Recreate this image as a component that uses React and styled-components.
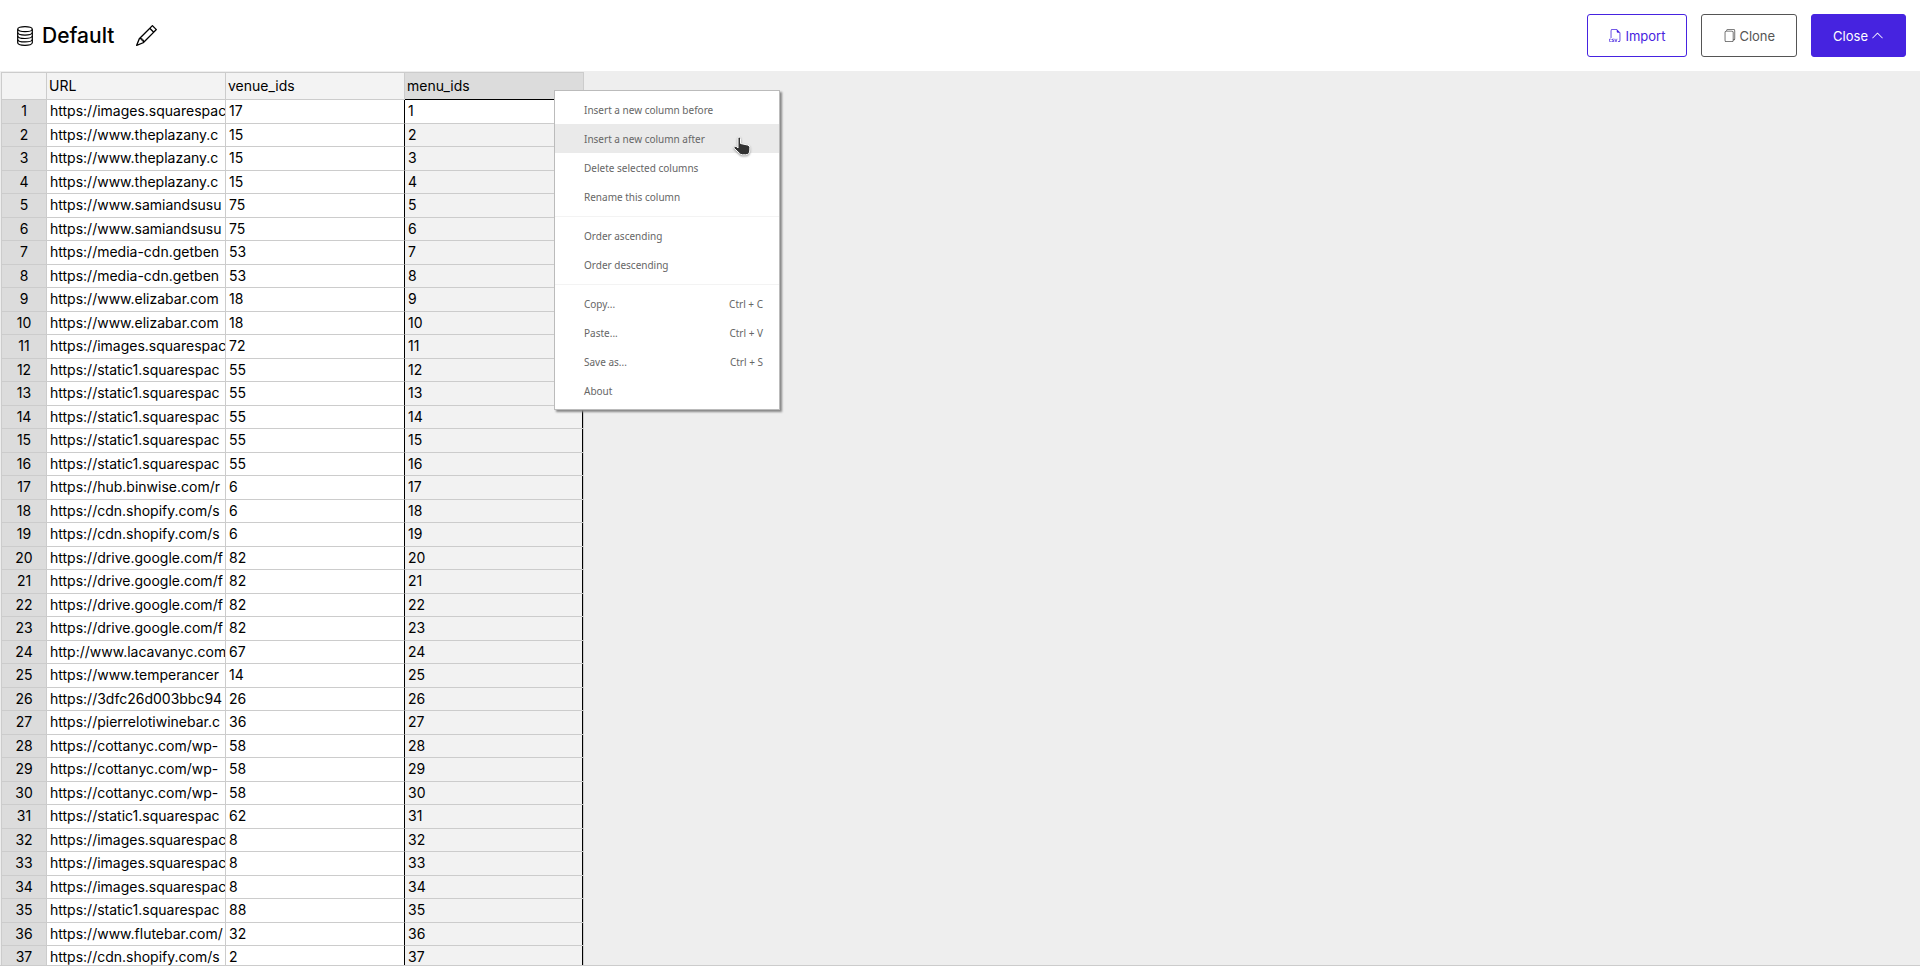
import React, { useState } from 'react'
import styled, { createGlobalStyle } from 'styled-components'
import { BsPencil, BsFiletypeCsv, BsFiles, BsChevronUp } from 'react-icons/bs'

const columns = ['URL', 'venue_ids', 'menu_ids']

const rows = [
  ['https://images.squarespac', '17'],
  ['https://www.theplazany.c', '15'],
  ['https://www.theplazany.c', '15'],
  ['https://www.theplazany.c', '15'],
  ['https://www.samiandsusu', '75'],
  ['https://www.samiandsusu', '75'],
  ['https://media-cdn.getben', '53'],
  ['https://media-cdn.getben', '53'],
  ['https://www.elizabar.com', '18'],
  ['https://www.elizabar.com', '18'],
  ['https://images.squarespac', '72'],
  ['https://static1.squarespac', '55'],
  ['https://static1.squarespac', '55'],
  ['https://static1.squarespac', '55'],
  ['https://static1.squarespac', '55'],
  ['https://static1.squarespac', '55'],
  ['https://hub.binwise.com/r', '6'],
  ['https://cdn.shopify.com/s', '6'],
  ['https://cdn.shopify.com/s', '6'],
  ['https://drive.google.com/f', '82'],
  ['https://drive.google.com/f', '82'],
  ['https://drive.google.com/f', '82'],
  ['https://drive.google.com/f', '82'],
  ['http://www.lacavanyc.com', '67'],
  ['https://www.temperancer', '14'],
  ['https://3dfc26d003bbc94', '26'],
  ['https://pierrelotiwinebar.c', '36'],
  ['https://cottanyc.com/wp-', '58'],
  ['https://cottanyc.com/wp-', '58'],
  ['https://cottanyc.com/wp-', '58'],
  ['https://static1.squarespac', '62'],
  ['https://images.squarespac', '8'],
  ['https://images.squarespac', '8'],
  ['https://images.squarespac', '8'],
  ['https://static1.squarespac', '88'],
  ['https://www.flutebar.com/', '32'],
  ['https://cdn.shopify.com/s', '2'],
]

const menuGroups = [
  [
    { label: 'Insert a new column before' },
    { label: 'Insert a new column after' },
    { label: 'Delete selected columns' },
    { label: 'Rename this column' },
  ],
  [{ label: 'Order ascending' }, { label: 'Order descending' }],
  [
    { label: 'Copy...', shortcut: 'Ctrl + C' },
    { label: 'Paste...', shortcut: 'Ctrl + V' },
    { label: 'Save as...', shortcut: 'Ctrl + S' },
    { label: 'About' },
  ],
]

const Database = () => (
  <svg
    viewBox='0 0 16 20'
    fill='none'
    stroke='currentColor'
    strokeWidth='1.2'
    aria-hidden='true'
  >
    <ellipse cx='8' cy='3.2' rx='7.3' ry='2.5' />
    <path d='M.7 3.2v13.6C.7 18.2 4 19.3 8 19.3s7.3-1.1 7.3-2.5V3.2' />
    <path d='M.7 6.6C.7 8 4 9.1 8 9.1s7.3-1.1 7.3-2.5M.7 10c0 1.4 3.3 2.5 7.3 2.5s7.3-1.1 7.3-2.5M.7 13.4c0 1.4 3.3 2.5 7.3 2.5s7.3-1.1 7.3-2.5' />
  </svg>
)

const Pointer = () => (
  <PointerIcon viewBox='0 0 18 20' aria-hidden='true'>
    <path
      d='M5 2.5Q5 1 6.2 1T7.5 2.5V7.5l7 1.5q2.3.5 2.3 2.5V14q0 4.8-4.3 4.8H9.5q-2 0-3.2-1.6L1.5 12.6q-1-1.4.3-2.1 1.1-.5 2.1.4L5 12z'
      fill='#333'
      stroke='#fff'
      strokeWidth='1'
    />
  </PointerIcon>
)

const App = () => {
  const [active, setActive] = useState('Insert a new column after')

  return (
    <Page>
      <GlobalStyle />
      <Header>
        <Title>
          <Database />
          <h1>Default</h1>
          <EditButton type='button' aria-label='Rename'>
            <BsPencil />
          </EditButton>
        </Title>
        <Actions>
          <Button type='button' $color='#4623e0'>
            <BsFiletypeCsv />
            Import
          </Button>
          <Button type='button' $color='#555'>
            <BsFiles />
            Clone
          </Button>
          <Button type='button' $color='#4623e0' $filled>
            Close
            <BsChevronUp />
          </Button>
        </Actions>
      </Header>

      <Sheet>
        <Table>
          <colgroup>
            <IndexCol />
            {columns.map((name) => (
              <DataCol key={name} />
            ))}
          </colgroup>
          <thead>
            <tr>
              <ColumnHead aria-label='Row' />
              {columns.map((name) => (
                <ColumnHead key={name} $selected={name === 'menu_ids'}>
                  {name}
                </ColumnHead>
              ))}
            </tr>
          </thead>
          <tbody>
            {rows.map(([url, venue], i) => (
              <Row key={i}>
                <RowHead scope='row'>{i + 1}</RowHead>
                <Cell>{url}</Cell>
                <Cell $edge>{venue}</Cell>
                <SelectedCell $focused={i === 0}>{i + 1}</SelectedCell>
              </Row>
            ))}
          </tbody>
        </Table>

        <Menu>
          {menuGroups.map((group, i) => (
            <MenuGroup key={i}>
              {group.map(({ label, shortcut }) => (
                <MenuItem
                  key={label}
                  type='button'
                  $active={label === active}
                  onMouseEnter={() => setActive(label)}
                >
                  <span>{label}</span>
                  {shortcut && <span>{shortcut}</span>}
                </MenuItem>
              ))}
            </MenuGroup>
          ))}
          <Pointer />
        </Menu>
      </Sheet>
    </Page>
  )
}

const GlobalStyle = createGlobalStyle`
  * {
    box-sizing: border-box;
  }
  body {
    margin: 0;
    color: #000;
    background: #fff;
    font-family: Inter, 'Liberation Sans', sans-serif;
  }
`

const Page = styled.div`
  display: flex;
  flex-direction: column;
  height: 100vh;
`

const Header = styled.header`
  display: flex;
  flex: none;
  align-items: center;
  justify-content: space-between;
  padding: 14px 14px 14px 17px;
`

const Title = styled.div`
  display: flex;
  align-items: center;

  > svg {
    width: 16px;
    height: 20px;
    margin-right: 9px;
  }

  h1 {
    margin: 0;
    font-size: 21px;
    font-weight: 500;
    line-height: 28px;
  }
`

const EditButton = styled.button`
  display: flex;
  margin-left: 22px;
  padding: 0;
  border: 0;
  color: inherit;
  background: none;
  cursor: pointer;

  svg {
    width: 21px;
    height: 21px;
  }
`

const Actions = styled.div`
  display: flex;
  gap: 14px;
`

const Button = styled.button`
  display: flex;
  align-items: center;
  gap: 3px;
  height: 43px;
  padding: 0 21px;
  border: 1px solid ${({ $color }) => $color};
  border-radius: 3px;
  color: ${({ $color, $filled }) => ($filled ? '#fff' : $color)};
  background: ${({ $color, $filled }) => ($filled ? $color : '#fff')};
  font-family: inherit;
  font-size: 13px;
  cursor: pointer;

  svg {
    width: 13px;
    height: 13px;
  }
`

const Sheet = styled.main`
  position: relative;
  flex: 1;
  min-height: 0;
  padding: 1px 0 0 1px;
  overflow: hidden;
  border-bottom: 1px solid #ccc;
  background: #eee;
`

const Table = styled.table`
  width: 583px;
  border-collapse: separate;
  border-spacing: 0;
  border-top: 1px solid #ccc;
  border-left: 1px solid #ccc;
  table-layout: fixed;
  font-size: 14px;
`

const IndexCol = styled.col`
  width: 45px;
`

const DataCol = styled.col`
  width: 179px;
`

const ColumnHead = styled.th`
  height: 27px;
  padding: 0 2px;
  border-right: 1px solid #ccc;
  border-bottom: 1px solid ${({ $selected }) => ($selected ? '#000' : '#ccc')};
  background: ${({ $selected }) => ($selected ? '#dcdcdc' : '#f3f3f3')};
  font-weight: 400;
  line-height: 20px;
  text-align: left;
`

const Row = styled.tr`
  height: 23px;

  &:nth-child(odd) {
    height: 24px;
  }
`

const RowHead = styled.th`
  padding: 0 0 1px;
  border-right: 1px solid #ccc;
  border-bottom: 1px solid #ccc;
  background: #dcdcdc;
  font-weight: 400;
  line-height: 20px;
`

const Cell = styled.td`
  padding: 0 0 1px 3px;
  overflow: hidden;
  border-right: 1px solid ${({ $edge }) => ($edge ? '#000' : '#ccc')};
  border-bottom: 1px solid #ccc;
  background: #fff;
  line-height: 20px;
  white-space: nowrap;
`

const SelectedCell = styled(Cell)`
  background: ${({ $focused }) => ($focused ? '#fff' : '#f2f2f2')};
  box-shadow: inset -1px 0 #000;
`

const Menu = styled.div`
  position: absolute;
  top: 19px;
  left: 554px;
  width: 226px;
  padding: 4px 0;
  border: 1px solid #bbb;
  background: #fff;
  box-shadow: 2px 2px 2px #888;
`

const MenuGroup = styled.div`
  & + & {
    margin-top: 5px;
    padding-top: 4px;
    border-top: 1px solid #f3f3f3;
  }
`

const MenuItem = styled.button`
  display: flex;
  align-items: center;
  justify-content: space-between;
  width: 100%;
  height: 29px;
  padding: 0 16px 0 29px;
  border: 0;
  color: #666;
  background: ${({ $active }) => ($active ? '#eaeaea' : 'none')};
  font-family: 'Noto Sans', sans-serif;
  font-size: 10px;
  cursor: pointer;
`

const PointerIcon = styled.svg`
  position: absolute;
  top: 45px;
  left: 178px;
  width: 18px;
  height: 20px;
  filter: drop-shadow(0 1px 1px #999);
  pointer-events: none;
`

export default App
